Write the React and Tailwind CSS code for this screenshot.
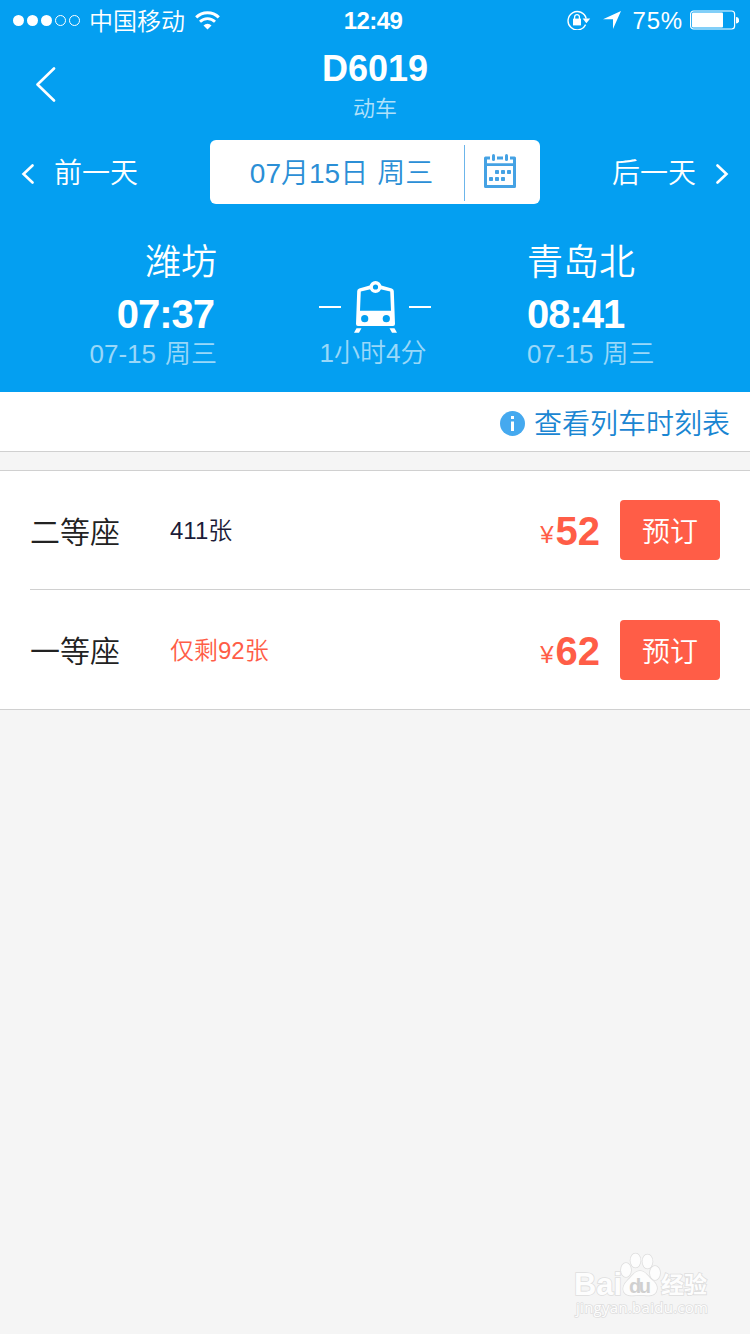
import React from "react";

const seats = [
  { id: 1, name: "二等座", left: 411, few: false, price: 52 },
  { id: 2, name: "一等座", left: 92, few: true, price: 62 },
];

const StatusBar = () => (
  <div className="flex h-10 items-center justify-between pl-[13px] pr-[11px]">
    <div className="flex w-[300px] items-center">
      <svg width="68" height="12" viewBox="0 0 68 12" fill="#fff">
        <circle cx="5.5" cy="6.5" r="5.5" />
        <circle cx="19.5" cy="6.5" r="5.5" />
        <circle cx="33.5" cy="6.5" r="5.5" />
        <circle cx="47.5" cy="6.5" r="5" fill="none" stroke="#fff" />
        <circle cx="61.5" cy="6.5" r="5" fill="none" stroke="#fff" />
      </svg>
      <span className="ml-2 pt-[3px] text-[24px] leading-9 font-[350]">中国移动</span>
      <svg className="ml-2.5" width="25" height="19" viewBox="0 0 25 19" fill="none" stroke="#fff">
        <path d="M1.2 6.4a16 16 0 0 1 22.6 0" strokeWidth="3" />
        <path d="M5 10.8a10.6 10.6 0 0 1 15 0" strokeWidth="2.8" />
        <path d="M12.5 18.6l-4-4.2a5.8 5.8 0 0 1 8 0z" fill="#fff" stroke="none" />
      </svg>
    </div>
    <span className="mr-3 pt-0.5 text-[24px] leading-9 font-bold tracking-[-0.6px]">12:49</span>
    <div className="flex w-[294px] items-center justify-end">
      <svg width="24" height="20" viewBox="0 0 24 20" fill="#fff">
        <path d="M18.6 14.6A9.2 9.2 0 1 1 19.2 8.6" fill="none" stroke="#fff" strokeWidth="1.4" />
        <path d="M15.6 8.6h7.6l-3.8 4.6z" />
        <path d="M6 8.6h8v6.8H6z" />
        <path d="M7.6 9V7a2.4 2.4 0 0 1 4.8 0v2" fill="none" stroke="#fff" strokeWidth="1.3" />
      </svg>
      <svg className="ml-3" width="18" height="18" viewBox="0 0 18 18" fill="#fff">
        <path d="M18 0L10 18V8.2H0z" />
      </svg>
      <span className="ml-3 pt-0.5 text-[24px] leading-9 tracking-[0.8px]">75%</span>
      <svg className="ml-[7px]" width="49" height="20" viewBox="0 0 49 20">
        <rect x="0.6" y="1" width="44" height="18" rx="3" fill="none" stroke="#fff" strokeWidth="1.2" />
        <rect x="2" y="2.5" width="31" height="15" rx="1" fill="#fff" />
        <path d="M46 7a3 3.2 0 0 1 0 6.6z" fill="#fff" />
      </svg>
    </div>
  </div>
);

const CalendarIcon = () => (
  <svg width="32" height="35" viewBox="0 0 32 35" fill="#45a2e4">
    <path d="M1.5 4v28.500h29V4" fill="none" stroke="#45a2e4" strokeWidth="3" strokeLinejoin="round" />
    <path d="M0 4a1.5 1.5 0 0 1 1.5-1.5H6v3H0zM13 2.5h6v3h-6zM26 2.5h4.5A1.5 1.5 0 0 1 32 4v1.5h-6zM0 9.2h32v2.8H0z" />
    <rect x="8" y="0" width="3" height="7" rx="1.5" />
    <rect x="21" y="0" width="3" height="7" rx="1.5" />
    <rect x="11" y="16" width="4" height="4" rx="0.8" />
    <rect x="17" y="16" width="4" height="4" rx="0.8" />
    <rect x="23" y="16" width="4" height="4" rx="0.8" />
    <rect x="5" y="23" width="4" height="4" rx="0.8" />
    <rect x="11" y="23" width="4" height="4" rx="0.8" />
    <rect x="17" y="23" width="4" height="4" rx="0.8" />
  </svg>
);

const TrainIcon = () => (
  <svg width="43" height="52" viewBox="0 0 43 52" fill="#fff">
    <path
      fillRule="evenodd"
      d="M3.2 10Q3.3 8 5.2 7.400L16.500 4.300h10L37.800 7.400Q39.700 8 39.800 10L41 43q0 2-2 2H4q-2 0-2-2zM6.800 10.600L6 29.800h31L36.200 10.600L26.500 8.200h-10z"
    />
    <circle cx="21.5" cy="6" r="4.3" fill="#049ff1" stroke="#fff" strokeWidth="3.4" />
    <circle cx="10.7" cy="37.7" r="3.6" fill="#049ff1" />
    <circle cx="32.3" cy="37.7" r="3.6" fill="#049ff1" />
    <path d="M2.5 47.200h5L5 51.800H0zM35.500 47.200h5l2.500 4.600h-5z" />
  </svg>
);

const DateBar = () => (
  <div className="flex h-16 items-center justify-between px-[21px]">
    <button className="flex items-center pt-[3px]">
      <svg width="13" height="20" viewBox="0 0 13 20" fill="none" stroke="#fff" strokeWidth="2.6">
        <path d="M11.5 1.5L2.5 10l9 8.5" strokeLinecap="round" />
      </svg>
      <span className="ml-5 text-[28px] leading-[60px] font-[350]">前一天</span>
    </button>
    <div className="flex h-16 w-[330px] items-center rounded-md bg-white">
      <span className="w-[254px] pt-1 pl-[9px] text-center text-[28px] leading-[60px] text-[#2b8fd6]">
        07<span className="font-[350]">月</span>15<span className="font-[350]">日</span>
        <span className="ml-[9px] font-[350]">周三</span>
      </span>
      <div className="mt-0.5 h-14 w-px bg-[#6cb5ea]" />
      <div className="flex-1 pb-0.5 pl-[19px]">
        <CalendarIcon />
      </div>
    </div>
    <button className="flex items-center pt-[3px]">
      <span className="mr-5 text-[28px] leading-[60px] font-[350]">后一天</span>
      <svg width="13" height="20" viewBox="0 0 13 20" fill="none" stroke="#fff" strokeWidth="2.6">
        <path d="M1.5 1.5l9 8.5l-9 8.5" strokeLinecap="round" />
      </svg>
    </button>
  </div>
);

const Station = ({ name, time }) => (
  <>
    <p className="h-[52px] pt-px text-[36px] leading-[52px] font-[350]">{name}</p>
    <p className="mt-0.5 h-[48px] pr-[3px] text-[40px] leading-[48px] font-bold tracking-[-1px]">{time}</p>
    <p className="h-8 text-[26px] leading-8 text-white/60">
      07-15<span className="ml-[9px] font-[350]">周三</span>
    </p>
  </>
);

const Watermark = () => (
  <svg className="absolute right-[35px] bottom-[14px]" width="142" height="70" viewBox="0 0 142 70">
    <g
      fill="#fdfdfd"
      stroke="#dedede"
      strokeWidth="1.6"
      paintOrder="stroke"
      className="font-['Liberation_Sans','Noto_Sans_CJK_SC',sans-serif]"
    >
      <ellipse cx="53" cy="20" rx="5" ry="7" />
      <ellipse cx="62.5" cy="10.500" rx="5" ry="7" />
      <ellipse cx="74.5" cy="11.500" rx="5" ry="7" />
      <ellipse cx="82" cy="23" rx="5" ry="7" />
      <path d="M67 21c6 0 8 6 12 9 5 4 6 8 4 12-3 5-10 3-16 3s-13 2-16-3c-2-4 0-8 4-12 4-3 6-9 12-9z" />
      <text x="1" y="45" fontSize="32" fontWeight="bold" textLength="48" lengthAdjust="spacingAndGlyphs">Bai</text>
      <text x="56" y="43" fontSize="20" fontWeight="bold" fill="#d0d0d0" stroke="none" textLength="22">du</text>
      <text x="88" y="42.5" fontSize="23" fontWeight="bold">经验</text>
      <text x="3" y="63" fontSize="15" textLength="132" className="font-['Open_Sans',sans-serif]">jingyan.baidu.com</text>
    </g>
  </svg>
);

const App = () => {
  return (
    <div className="relative h-[1334px] w-[750px] overflow-hidden bg-[#f5f5f5] font-['Liberation_Sans','Noto_Sans_CJK_SC',sans-serif]">
      <header className="h-[392px] bg-[#049ff1] text-white">
        <StatusBar />
        <div className="flex h-[100px] justify-between">
          <button className="w-[100px] pb-3 pl-[35px]">
            <svg width="21" height="36" viewBox="0 0 21 36" fill="none" stroke="#fff" strokeWidth="2.6">
              <path d="M19 2.5L2.5 18.500L19 34.500" strokeLinecap="round" strokeLinejoin="round" />
            </svg>
          </button>
          <div className="pt-[9px] text-center">
            <h1 className="text-[36px] leading-10 font-bold">D6019</h1>
            <p className="mt-1 text-[22px] leading-8 font-[350] text-white/70">动车</p>
          </div>
          <div className="w-[100px]" />
        </div>
        <DateBar />
        <div className="flex pt-[32px]">
          <div className="w-[217px] text-right">
            <Station name="潍坊" time="07:37" />
          </div>
          <div className="flex w-[310px] flex-col items-center pt-[45px] pl-[6px]">
            <div className="flex items-center">
              <div className="h-0.5 w-[22px] bg-white" />
              <div className="mr-3 ml-[13px]">
                <TrainIcon />
              </div>
              <div className="h-0.5 w-[22px] bg-white" />
            </div>
            <p className="mt-1 pr-1 text-[26px] leading-8 text-white/60">
              1<span className="font-[350]">小时</span>4<span className="font-[350]">分</span>
            </p>
          </div>
          <div>
            <Station name="青岛北" time="08:41" />
          </div>
        </div>
      </header>

      <div className="flex h-[60px] items-center justify-end border-b border-[#d0d0d0] bg-white pt-1 pr-5">
        <svg width="25" height="25" viewBox="0 0 25 25">
          <circle cx="12.5" cy="12.5" r="12.5" fill="#45a9ef" />
          <path d="M11 5h3v3h-3zM11 10.500h3v9.500h-3z" fill="#fff" />
        </svg>
        <span className="ml-[9px] pt-0.5 text-[28px] leading-[54px] font-[350] text-[#1a86d2]">查看列车时刻表</span>
      </div>

      <ul className="mt-[18px] border-y border-[#d0d0d0] bg-white pl-[30px]">
        {seats.map((seat) => (
          <li key={seat.id} className="flex h-[119px] items-center border-[#d0d0d0] pr-[30px] not-last:h-[119px] not-last:border-b">
            <span className="w-[140px] pt-1 text-[30px] font-[350] text-[#222]">{seat.name}</span>
            <span className={`flex-1 pt-0.5 text-[24px] ${seat.few ? "text-[#ff5d47]" : "text-[#1c1c38]"}`}>
              {seat.few && <span className="font-[350]">仅剩</span>}
              {seat.left}
              <span className="font-[350]">张</span>
            </span>
            <span className="mr-5 flex items-baseline pt-0.5 text-[#ff5d47]">
              <span className="mr-0.5 pb-0.5 align-baseline text-[24px]">
                <span className="inline-block -translate-y-0.5">¥</span>
              </span>
              <b className="text-[40px]">{seat.price}</b>
            </span>
            <button className="h-[60px] w-[100px] rounded bg-[#ff5d47] pt-[5px] text-[28px] leading-[55px] font-[350] text-white">
              预订
            </button>
          </li>
        ))}
      </ul>

      <Watermark />
    </div>
  );
};

export default App;
